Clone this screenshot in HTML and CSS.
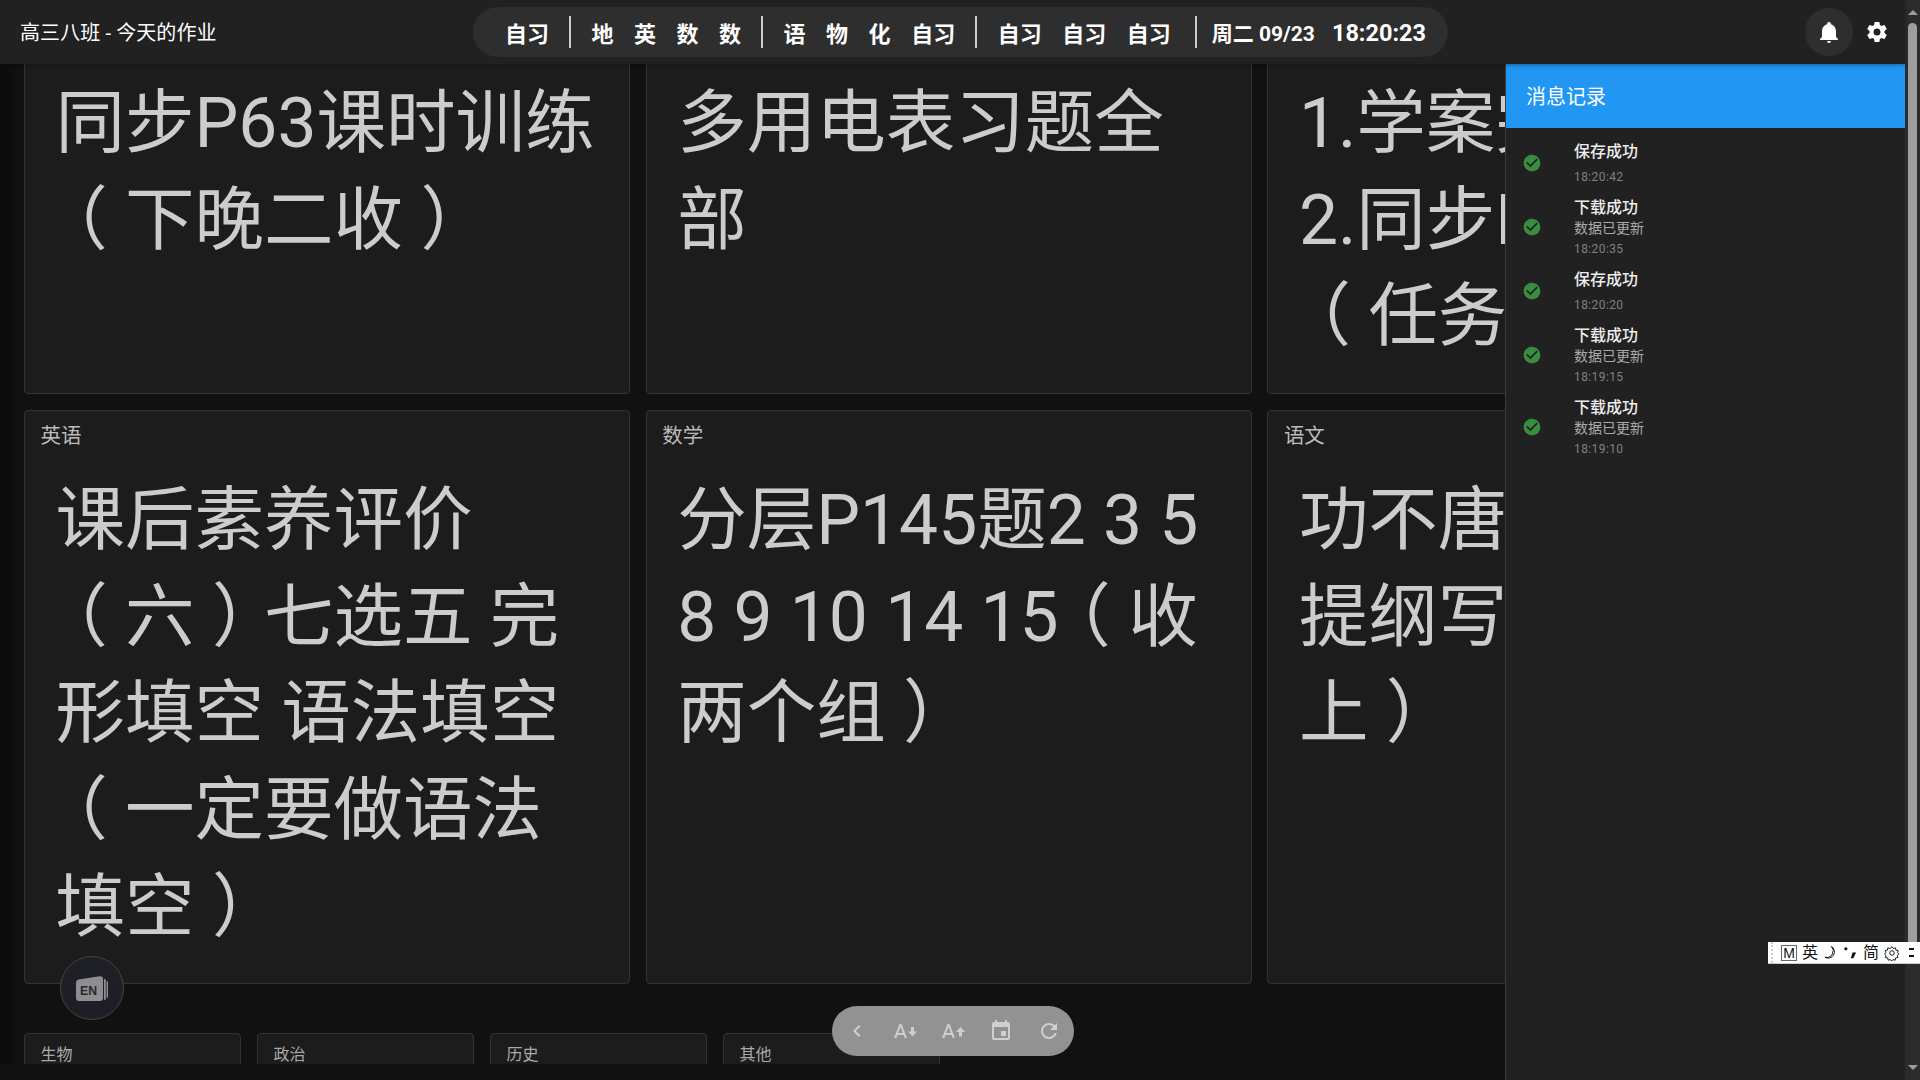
FILE: index.html
```html
<!DOCTYPE html>
<html lang="zh-CN">
<head>
<meta charset="utf-8">
<title>高三八班 - 今天的作业</title>
<link rel="stylesheet" href="styles.css">
</head>
<body>
<div class="page">
  <header class="topbar">
    <div class="title">高三八班 - 今天的作业</div>
    <div class="schedule">
      <div class="group"><span>自习</span></div>
      <i class="divider"></i>
      <div class="group"><span>地</span><span>英</span><span>数</span><span>数</span></div>
      <i class="divider"></i>
      <div class="group"><span>语</span><span>物</span><span>化</span><span>自习</span></div>
      <i class="divider"></i>
      <div class="group"><span>自习</span><span>自习</span><span>自习</span></div>
      <i class="divider thin"></i>
      <div class="clock"><span class="date">周二 09/23</span><span class="time">18:20:23</span></div>
    </div>
    <div class="actions">
      <button class="round active"><svg viewBox="0 0 24 24"><path d="M21,19V20H3V19L5,17V11C5,7.9 7.03,5.17 10,4.29C10,4.19 10,4.1 10,4A2,2 0 0,1 12,2A2,2 0 0,1 14,4C14,4.1 14,4.19 14,4.29C16.97,5.17 19,7.9 19,11V17L21,19M14,21A2,2 0 0,1 12,23A2,2 0 0,1 10,21"/></svg></button>
      <button class="round"><svg viewBox="0 0 24 24"><path d="M12,15.5A3.5,3.5 0 0,1 8.5,12A3.5,3.5 0 0,1 12,8.5A3.5,3.5 0 0,1 15.5,12A3.5,3.5 0 0,1 12,15.5M19.43,12.97C19.47,12.65 19.5,12.33 19.5,12C19.5,11.67 19.47,11.34 19.43,11L21.54,9.37C21.73,9.22 21.78,8.95 21.66,8.73L19.66,5.27C19.54,5.05 19.27,4.96 19.05,5.05L16.56,6.05C16.04,5.66 15.5,5.32 14.87,5.07L14.5,2.42C14.46,2.18 14.25,2 14,2H10C9.75,2 9.54,2.18 9.5,2.42L9.13,5.07C8.5,5.32 7.96,5.66 7.44,6.05L4.95,5.05C4.73,4.96 4.46,5.05 4.34,5.27L2.34,8.73C2.21,8.95 2.27,9.22 2.46,9.37L4.57,11C4.53,11.34 4.5,11.67 4.5,12C4.5,12.33 4.53,12.65 4.57,12.97L2.46,14.63C2.27,14.78 2.21,15.05 2.34,15.27L4.34,18.73C4.46,18.95 4.73,19.03 4.95,18.95L7.44,17.94C7.96,18.34 8.5,18.68 9.13,18.93L9.5,21.58C9.54,21.82 9.75,22 10,22H14C14.25,22 14.46,21.82 14.5,21.58L14.87,18.93C15.5,18.67 16.04,18.34 16.56,17.94L19.05,18.95C19.27,19.03 19.54,18.95 19.66,18.73L21.66,15.27C21.78,15.05 21.73,14.78 21.54,14.63L19.43,12.97Z"/></svg></button>
    </div>
  </header>

  <main class="board">
    <div class="scroller">
      <section class="grid-main">
        <article class="card first">
          <p>同步P63课时训练<span class="nb"><b>（</b>下</span>晚二<span class="nb">收<b>）</b></span></p>
        </article>
        <article class="card first">
          <p>多用电表习题全部</p>
        </article>
        <article class="card first">
          <p>1.学案完<br>2.同步P<br><b>（</b>任务</p>
        </article>
        <article class="card second">
          <h3>英语</h3>
          <p>课后素养评价<span class="nb"><b>（</b>六<b>）</b></span>七选五 完形填空 语法填空<span class="nb"><b>（</b>一</span>定要做语法填<span class="nb">空<b>）</b></span></p>
        </article>
        <article class="card second">
          <h3>数学</h3>
          <p>分层P145题2 3 5 8 9 10 14 15<span class="nb"><b>（</b>收</span>两个<span class="nb">组<b>）</b></span></p>
        </article>
        <article class="card second">
          <h3>语文</h3>
          <p>功不唐<br>提纲写<br><span class="nb">上<b>）</b></span></p>
        </article>
      </section>
      <section class="grid-small">
        <article class="card small"><h3>生物</h3></article>
        <article class="card small"><h3>政治</h3></article>
        <article class="card small"><h3>历史</h3></article>
        <article class="card small"><h3>其他</h3></article>
      </section>
    </div>
  </main>

  <div class="en-float">
    <svg viewBox="0 0 40 32" width="40" height="32">
      <rect class="en-back" x="32" y="7" width="1.800" height="21" rx=".9"/>
      <rect class="en-back" x="34.600" y="9" width="1.400" height="17" rx=".7"/>
      <path class="en-face" d="M6.500 7.500 L27.500 4.200 Q31 3.800 31 7 V26 Q31 29 28 29 H7 Q4 29 4 26 V10.500 Q4 8 6.500 7.500Z"/>
      <text class="en-text" x="8" y="22.500" textLength="17" lengthAdjust="spacingAndGlyphs">EN</text>
    </svg>
  </div>

  <div class="toolbar">
    <button><svg viewBox="0 0 24 24"><path d="M15.41,16.58L10.83,12L15.41,7.41L14,6L8,12L14,18L15.41,16.58Z"/></svg></button>
    <button><svg viewBox="0 0 24 24"><path d="M5.12,14L7.5,7.67L9.87,14M6.5,5L1,19H3.25L4.37,16H10.62L11.75,19H14L8.5,5H6.5M18,8H21V12.500H24L19.500,17.500L15,12.500H18Z"/></svg></button>
    <button><svg viewBox="0 0 24 24"><path d="M5.12,14L7.5,7.67L9.87,14M6.5,5L1,19H3.25L4.37,16H10.62L11.75,19H14L8.5,5H6.5M18,17.500H21V13H24L19.500,8L15,13H18Z"/></svg></button>
    <button><svg viewBox="0 0 24 24"><path d="M19,19H5V8H19M16,1V3H8V1H6V3H5C3.89,3 3,3.89 3,5V19A2,2 0 0,0 5,21H19A2,2 0 0,0 21,19V5C21,3.89 20.1,3 19,3H18V1M17,12H12V17H17V12Z"/></svg></button>
    <button><svg viewBox="0 0 24 24"><path d="M17.65,6.35C16.2,4.9 14.21,4 12,4A8,8 0 0,0 4,12A8,8 0 0,0 12,20C15.73,20 18.84,17.45 19.73,14H17.65C16.83,16.33 14.61,18 12,18A6,6 0 0,1 6,12A6,6 0 0,1 12,6C13.66,6 15.14,6.69 16.22,7.78L13,11H20V4L17.65,6.35Z"/></svg></button>
  </div>

  <aside class="drawer">
    <div class="drawer-head">消息记录</div>
    <ul class="log">
      <li class="entry">
        <svg class="ok" viewBox="0 0 24 24"><path d="M12 2C6.5 2 2 6.5 2 12S6.5 22 12 22 22 17.5 22 12 17.5 2 12 2M10 17L5 12L6.41 10.59L10 14.17L17.59 6.58L19 8L10 17Z"/></svg>
        <div><div class="e-title">保存成功</div><div class="e-time spaced">18:20:42</div></div>
      </li>
      <li class="entry tall">
        <svg class="ok" viewBox="0 0 24 24"><path d="M12 2C6.5 2 2 6.5 2 12S6.5 22 12 22 22 17.5 22 12 17.5 2 12 2M10 17L5 12L6.41 10.59L10 14.17L17.59 6.58L19 8L10 17Z"/></svg>
        <div><div class="e-title">下载成功</div><div class="e-sub">数据已更新</div><div class="e-time">18:20:35</div></div>
      </li>
      <li class="entry">
        <svg class="ok" viewBox="0 0 24 24"><path d="M12 2C6.5 2 2 6.5 2 12S6.5 22 12 22 22 17.5 22 12 17.5 2 12 2M10 17L5 12L6.41 10.59L10 14.17L17.59 6.58L19 8L10 17Z"/></svg>
        <div><div class="e-title">保存成功</div><div class="e-time spaced">18:20:20</div></div>
      </li>
      <li class="entry tall">
        <svg class="ok" viewBox="0 0 24 24"><path d="M12 2C6.5 2 2 6.5 2 12S6.5 22 12 22 22 17.5 22 12 17.5 2 12 2M10 17L5 12L6.41 10.59L10 14.17L17.59 6.58L19 8L10 17Z"/></svg>
        <div><div class="e-title">下载成功</div><div class="e-sub">数据已更新</div><div class="e-time">18:19:15</div></div>
      </li>
      <li class="entry tall">
        <svg class="ok" viewBox="0 0 24 24"><path d="M12 2C6.5 2 2 6.5 2 12S6.5 22 12 22 22 17.5 22 12 17.5 2 12 2M10 17L5 12L6.41 10.59L10 14.17L17.59 6.58L19 8L10 17Z"/></svg>
        <div><div class="e-title">下载成功</div><div class="e-sub">数据已更新</div><div class="e-time">18:19:10</div></div>
      </li>
    </ul>
  </aside>
</div>

<div class="scrollbar">
  <i class="arrow up"></i>
  <div class="thumb"></div>
  <i class="arrow down"></i>
</div>

<div class="ime">
  <i class="grip"></i>
  <span class="ime-m">M</span>
  <span class="ime-ch">英</span>
  <svg class="ime-svg" viewBox="0 0 16 16"><path d="M9 1.500 A6.500 6.500 0 0 1 2 13 A7 7 0 0 0 9 1.500Z"/></svg>
  <svg class="ime-svg" viewBox="0 0 16 16"><circle cx="3" cy="4" r="1.700" class="solid"/><path class="solid" d="M10 8h4l-3 6h-2.500z"/></svg>
  <span class="ime-ch">简</span>
  <svg class="ime-svg gear" viewBox="0 0 24 24"><circle cx="12" cy="12" r="3.400"/><path d="M12 2.500l2 2.800 3.300-1 .6 3.400 3.400.6-1 3.300 2 2-2.400 2 1 3.200-3.500.6-.6 3.400-3.300-1-2 2.200-2-2.200-3.300 1-.6-3.400-3.500-.6 1-3.200-2.400-2 2-2-1-3.300 3.400-.6.6-3.400 3.300 1z"/></svg>
  <span class="ime-more"></span>
</div>
</body>
</html>
```
FILE: styles.css
```css
* { box-sizing: border-box; }
html, body { height: 100%; }
body {
  margin: 0;
  height: 1080px;
  display: flex;
  overflow: hidden;
  background: #111;
  font-family: Roboto, "Noto Sans CJK SC", sans-serif;
  color: #ccc;
}

.page {
  position: relative;
  width: 1905px;
  height: 1080px;
  flex: none;
  display: flex;
  flex-direction: column;
}

/* top bar */
.topbar {
  position: relative;
  z-index: 3;
  height: 64px;
  flex: none;
  background: #212121;
  display: flex;
  align-items: center;
  padding: 0 4px 0 20px;
  box-shadow: 0 1px 4px rgba(0, 0, 0, .35);
}
.title {
  width: 453px;
  flex: none;
  padding-bottom: 2px;
  font-size: 20px;
  letter-spacing: .1px;
  color: #fff;
  white-space: nowrap;
}
.schedule {
  width: 975px;
  height: 50px;
  flex: none;
  display: flex;
  align-items: center;
  padding-left: 32px;
  border-radius: 25px;
  background: #2e2e2e;
  color: #fff;
  font-weight: 700;
  font-size: 22px;
  white-space: nowrap;
}
.group { display: flex; gap: 20.500px; }
.divider {
  width: 2px;
  height: 32px;
  margin: 0 20.500px 0 20px;
  background: #ccc;
}
.divider.thin { width: 1.500px; margin: 0 15px 0 24.500px; }
.clock { display: flex; align-items: center; gap: 17px; }
.date { font-size: 21px; }
.time { font-size: 23.500px; padding-top: 1px; }
.actions { margin-left: auto; display: flex; }
.round {
  width: 48px;
  height: 48px;
  padding: 12px;
  border: 0;
  border-radius: 50%;
  background: none;
}
.round.active { background: #2e2e2e; }
.round svg { display: block; width: 24px; height: 24px; fill: #fff; }

/* homework board */
.board {
  height: 1000px;
  flex: none;
  overflow: hidden;
  background: linear-gradient(90deg, #0b0b0b 0, #111 22px);
}
.scroller { margin-top: -51px; padding-left: 24px; }
.grid-main {
  display: grid;
  grid-template-columns: repeat(3, 606px);
  grid-template-rows: 380.500px 573.500px;
  column-gap: 15.700px;
  row-gap: 16.500px;
}
.card {
  background: #1c1c1c;
  border: 1px solid #333;
  border-radius: 4px;
  overflow: hidden;
}
.card h3 {
  margin: 0;
  padding: 10px 15.500px 0;
  font-size: 20.500px;
  line-height: 30px;
  font-weight: 400;
  color: #bbb;
}
.card p {
  margin: 21.800px 0 0;
  padding: 0 20px 0 30.500px;
  font-size: 69.500px;
  line-height: 96.800px;
  color: #ccc;
}
.card.first p { margin-top: 61.800px; }
.card p b {
  display: inline-block;
  width: 1em;
  text-align: center;
  font-weight: 400;
  font-feature-settings: "halt";
}
.nb { white-space: nowrap; }
.grid-small {
  display: grid;
  grid-template-columns: repeat(4, 217px);
  column-gap: 16px;
  margin-top: 49.500px;
}
.card.small { height: 200px; }
.card.small h3 { padding-top: 6px; font-size: 16px; line-height: 30px; color: #aaa; }

/* floating */
.en-float {
  position: absolute;
  left: 60px;
  top: 956px;
  z-index: 2;
  width: 64px;
  height: 64px;
  display: flex;
  align-items: center;
  justify-content: center;
  border-radius: 50%;
  border: 1px solid #444;
  background: rgba(30, 32, 40, .92);
}
.en-face, .en-back { fill: #8e8e90; }
.en-text { font: 900 13.500px "Liberation Sans", sans-serif; fill: #26272c; }

.toolbar {
  position: absolute;
  left: 832px;
  top: 1006px;
  z-index: 2;
  width: 242px;
  height: 50px;
  padding-left: 1px;
  display: flex;
  align-items: center;
  border-radius: 25px;
  background: #929292;
}
.toolbar button {
  width: 48px;
  height: 48px;
  padding: 12px;
  border: 0;
  background: none;
}
.toolbar svg { display: block; width: 24px; height: 24px; fill: #cfcfcf; }

/* message drawer */
.drawer {
  position: absolute;
  left: 1505px;
  top: 64px;
  bottom: 0;
  z-index: 2;
  width: 400px;
  background: #212121;
  border-left: 1px solid #3c3c3c;
}
.drawer-head {
  height: 64px;
  padding: 0 0 2px 20px;
  display: flex;
  align-items: center;
  background: #2196f3;
  color: #fff;
  font-size: 20px;
}
.log { list-style: none; margin: 7px 0 0; padding: 0; }
.entry {
  height: 56px;
  padding: 7px 0 0 16px;
  display: flex;
  align-items: flex-start;
}
.entry.tall { height: 72px; padding-top: 7px; }
.ok {
  flex: none;
  width: 20px;
  height: 20px;
  margin-top: 11px;
  margin-right: 32px;
  fill: #388e3c;
  background: radial-gradient(circle, #212121 0 7px, transparent 7.500px);
  border-radius: 50%;
}
.entry.tall .ok { margin-top: 19px; }
.e-title { font-size: 16px; line-height: 20px; font-weight: 500; color: #eee; }
.e-sub { font-size: 14px; line-height: 20px; color: #aaa; }
.e-time { margin-top: 1px; font-size: 12px; line-height: 20px; letter-spacing: .4px; color: #808080; }
.e-time.spaced { margin-top: 5px; }

/* scrollbar */
.scrollbar {
  width: 15px;
  height: 1080px;
  flex: none;
  position: relative;
  background: #2c2c2c;
}
.thumb {
  position: absolute;
  left: 3px;
  top: 23px;
  width: 9px;
  height: 930px;
  border-radius: 5px 5px 0 0;
  background: #9e9e9e;
}
.arrow {
  position: absolute;
  left: 3px;
  width: 0;
  height: 0;
  border-left: 5px solid transparent;
  border-right: 5px solid transparent;
}
.arrow.up { top: 10px; border-bottom: 5px solid #9e9e9e; }
.arrow.down { bottom: 10px; border-top: 5px solid #9e9e9e; }

/* input method bar */
.ime {
  position: fixed;
  left: 1768px;
  top: 942px;
  z-index: 9;
  width: 152px;
  height: 22px;
  display: flex;
  align-items: center;
  background: #fff;
  border-bottom: 1px solid #ccc;
  color: #111;
  overflow: hidden;
}
.grip {
  width: 3px;
  height: 21px;
  margin: 0 7px 0 3px;
  flex: none;
  border-left: 2px dotted #ccc;
}
.ime-m {
  width: 16px;
  height: 16px;
  flex: none;
  margin-right: 5px;
  border: 1px solid #666;
  font: 14px/14px "Liberation Sans", sans-serif;
  text-align: center;
}
.ime-ch { width: 17px; flex: none; margin-right: 4px; font-size: 16px; line-height: 20px; }
.ime-svg { width: 15px; height: 15px; flex: none; margin-right: 5px; fill: none; stroke: #111; stroke-width: 1; }
.ime-svg .solid { fill: #111; stroke: none; }
.ime-svg.gear { width: 16px; height: 16px; margin-right: 9px; stroke-width: 1.400; }
.ime-more {
  width: 5px;
  height: 9px;
  flex: none;
  border-top: 2px solid #111;
  border-bottom: 2px solid #111;
  background: #fff;
}
```
